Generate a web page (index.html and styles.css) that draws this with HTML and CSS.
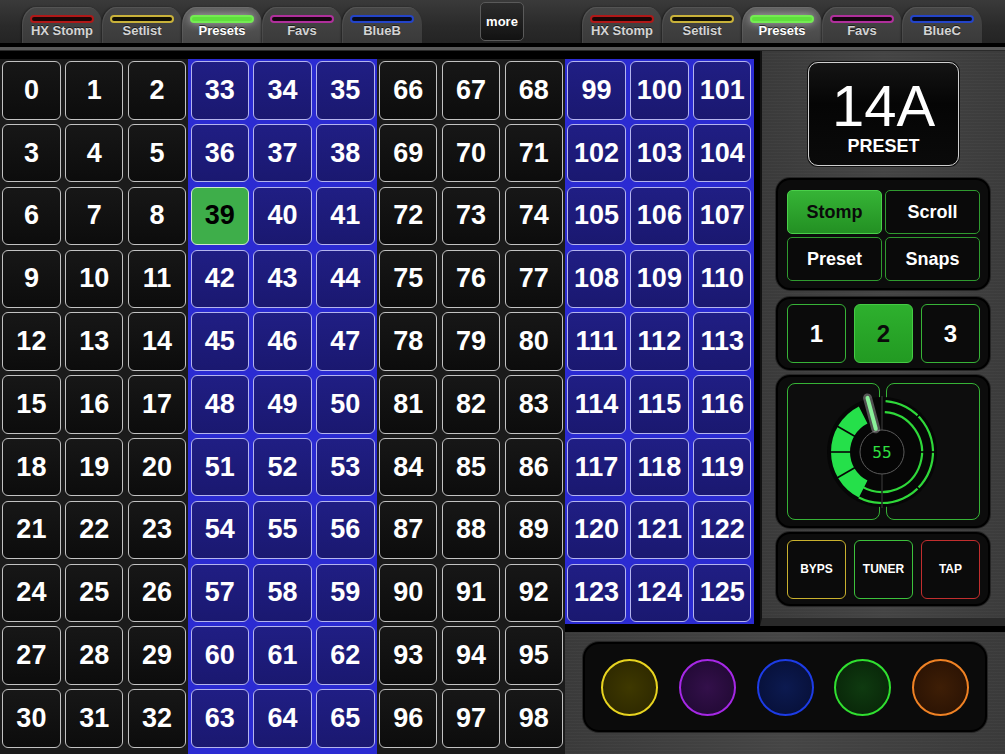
FILE: index.html
```html
<!DOCTYPE html>
<html>
<head>
<meta charset="utf-8">
<link rel="stylesheet" href="styles.css">
</head>
<body>
<div class="header">
  <div class="tabs">
    <div class="tab"><span class="pill pill-red"></span><span class="tab-label">HX Stomp</span></div>
    <div class="tab"><span class="pill pill-yellow"></span><span class="tab-label">Setlist</span></div>
    <div class="tab tab-active"><span class="pill pill-green"></span><span class="tab-label">Presets</span></div>
    <div class="tab"><span class="pill pill-magenta"></span><span class="tab-label">Favs</span></div>
    <div class="tab"><span class="pill pill-blue"></span><span class="tab-label">BlueB</span></div>
  </div>
  <div class="more">more</div>
  <div class="tabs">
    <div class="tab"><span class="pill pill-red"></span><span class="tab-label">HX Stomp</span></div>
    <div class="tab"><span class="pill pill-yellow"></span><span class="tab-label">Setlist</span></div>
    <div class="tab tab-active"><span class="pill pill-green"></span><span class="tab-label">Presets</span></div>
    <div class="tab"><span class="pill pill-magenta"></span><span class="tab-label">Favs</span></div>
    <div class="tab"><span class="pill pill-blue"></span><span class="tab-label">BlueC</span></div>
  </div>
</div>
<div class="divider"></div>
<div class="main">
  <div class="left">
    <div class="block block-dark">
      <div class="cell">0</div><div class="cell">1</div><div class="cell">2</div>
      <div class="cell">3</div><div class="cell">4</div><div class="cell">5</div>
      <div class="cell">6</div><div class="cell">7</div><div class="cell">8</div>
      <div class="cell">9</div><div class="cell">10</div><div class="cell">11</div>
      <div class="cell">12</div><div class="cell">13</div><div class="cell">14</div>
      <div class="cell">15</div><div class="cell">16</div><div class="cell">17</div>
      <div class="cell">18</div><div class="cell">19</div><div class="cell">20</div>
      <div class="cell">21</div><div class="cell">22</div><div class="cell">23</div>
      <div class="cell">24</div><div class="cell">25</div><div class="cell">26</div>
      <div class="cell">27</div><div class="cell">28</div><div class="cell">29</div>
      <div class="cell">30</div><div class="cell">31</div><div class="cell">32</div>
    </div>
    <div class="block block-blue">
      <div class="cell">33</div><div class="cell">34</div><div class="cell">35</div>
      <div class="cell">36</div><div class="cell">37</div><div class="cell">38</div>
      <div class="cell cell-active">39</div><div class="cell">40</div><div class="cell">41</div>
      <div class="cell">42</div><div class="cell">43</div><div class="cell">44</div>
      <div class="cell">45</div><div class="cell">46</div><div class="cell">47</div>
      <div class="cell">48</div><div class="cell">49</div><div class="cell">50</div>
      <div class="cell">51</div><div class="cell">52</div><div class="cell">53</div>
      <div class="cell">54</div><div class="cell">55</div><div class="cell">56</div>
      <div class="cell">57</div><div class="cell">58</div><div class="cell">59</div>
      <div class="cell">60</div><div class="cell">61</div><div class="cell">62</div>
      <div class="cell">63</div><div class="cell">64</div><div class="cell">65</div>
    </div>
    <div class="block block-dark">
      <div class="cell">66</div><div class="cell">67</div><div class="cell">68</div>
      <div class="cell">69</div><div class="cell">70</div><div class="cell">71</div>
      <div class="cell">72</div><div class="cell">73</div><div class="cell">74</div>
      <div class="cell">75</div><div class="cell">76</div><div class="cell">77</div>
      <div class="cell">78</div><div class="cell">79</div><div class="cell">80</div>
      <div class="cell">81</div><div class="cell">82</div><div class="cell">83</div>
      <div class="cell">84</div><div class="cell">85</div><div class="cell">86</div>
      <div class="cell">87</div><div class="cell">88</div><div class="cell">89</div>
      <div class="cell">90</div><div class="cell">91</div><div class="cell">92</div>
      <div class="cell">93</div><div class="cell">94</div><div class="cell">95</div>
      <div class="cell">96</div><div class="cell">97</div><div class="cell">98</div>
    </div>
  </div>
  <div class="right">
    <div class="top-row">
      <div class="block block-blue block-short">
        <div class="cell">99</div><div class="cell">100</div><div class="cell">101</div>
        <div class="cell">102</div><div class="cell">103</div><div class="cell">104</div>
        <div class="cell">105</div><div class="cell">106</div><div class="cell">107</div>
        <div class="cell">108</div><div class="cell">109</div><div class="cell">110</div>
        <div class="cell">111</div><div class="cell">112</div><div class="cell">113</div>
        <div class="cell">114</div><div class="cell">115</div><div class="cell">116</div>
        <div class="cell">117</div><div class="cell">118</div><div class="cell">119</div>
        <div class="cell">120</div><div class="cell">121</div><div class="cell">122</div>
        <div class="cell">123</div><div class="cell">124</div><div class="cell">125</div>
      </div>
      <div class="panel">
        <div class="display">
          <div class="display-big">14A</div>
          <div class="display-small">PRESET</div>
        </div>
        <div class="box box-mode">
          <div class="mbtn mbtn-on">Stomp</div>
          <div class="mbtn">Scroll</div>
          <div class="mbtn">Preset</div>
          <div class="mbtn">Snaps</div>
        </div>
        <div class="box box-nums">
          <div class="nbtn">1</div>
          <div class="nbtn nbtn-on">2</div>
          <div class="nbtn">3</div>
        </div>
        <div class="box box-knob">
          <div class="knob-area">
            <div class="knob-pane"></div>
            <div class="knob-pane"></div>
            <svg class="knob" width="120" height="120" viewBox="0 0 120 120">
              <circle cx="60" cy="60" r="55" fill="#060606"/>
              <path d="M63.56 9.12 A51 51 0 1 1 36.85 105.44" fill="none" stroke="#2fd83a" stroke-width="2.2"/>
              <path d="M62.79 20.10 A40 40 0 1 1 40 94.64" fill="none" stroke="#2fd83a" stroke-width="2.2"/>
              <path d="M36.85 105.44 A51 51 0 0 1 36.85 14.56 L45.47 31.49 A32 32 0 0 0 45.47 88.51 Z" fill="#25e04a"/>
              <g stroke="#060606" stroke-width="1.6">
                <line x1="33.15" y1="75.5" x2="14.97" y2="86"/>
                <line x1="29" y1="60" x2="8" y2="60"/>
                <line x1="33.15" y1="44.5" x2="14.97" y2="34"/>
                <line x1="89.7" y1="30.3" x2="98.9" y2="21.1"/>
                <line x1="98" y1="60" x2="113" y2="60"/>
                <line x1="89.7" y1="89.7" x2="98.9" y2="98.9"/>
              </g>
              <g stroke="#2a2a2a" stroke-width="1.6">
                <line x1="60" y1="4" x2="60" y2="38"/>
                <line x1="60" y1="82" x2="60" y2="116"/>
              </g>
              <circle cx="60" cy="60" r="22" fill="#050505" stroke="#5a5a5a" stroke-width="1"/>
              <line x1="53.79" y1="36.82" x2="45.51" y2="5.91" stroke="#ffffff" stroke-opacity="0.3" stroke-width="9" stroke-linecap="round"/>
              <line x1="53.79" y1="36.82" x2="45.51" y2="5.91" stroke="#8af09a" stroke-width="4" stroke-linecap="round"/>
              <text x="60" y="66" text-anchor="middle" class="knob-val">55</text>
            </svg>
          </div>
        </div>
        <div class="box box-ctrl">
          <div class="cbtn cbtn-yellow">BYPS</div>
          <div class="cbtn cbtn-green">TUNER</div>
          <div class="cbtn cbtn-red">TAP</div>
        </div>
      </div>
    </div>
    <div class="bottom">
      <div class="pads">
        <div class="pad pad-yellow"></div>
        <div class="pad pad-purple"></div>
        <div class="pad pad-blue"></div>
        <div class="pad pad-green"></div>
        <div class="pad pad-orange"></div>
      </div>
    </div>
  </div>
</div>
</body>
</html>
```

FILE: styles.css
```css
* { box-sizing: border-box; }
html, body { margin: 0; padding: 0; }
body {
  width: 1005px;
  height: 754px;
  overflow: hidden;
  background: #000;
  font-family: "Liberation Sans", Arial, Helvetica, sans-serif;
  color: #fff;
}

/* ---------- header ---------- */
.header {
  height: 43px;
  display: flex;
  align-items: flex-end;
  padding-left: 22px;
  background: linear-gradient(#3a3a3a, #2a2a2a 60%, #242424);
}
.tabs {
  display: flex;
  width: 399px;
  height: 36px;
}
.tab {
  flex: 0 0 80px;
  height: 36px;
  display: flex;
  flex-direction: column;
  align-items: center;
  border-radius: 14px 14px 0 0 / 18px 18px 0 0;
  background: linear-gradient(#474747, #3a3a3a);
  box-shadow: inset 1px 1px 0 rgba(255,255,255,0.07), -1px 0 2px rgba(0,0,0,0.45);
}
.tab-active {
  background: linear-gradient(#5e5e5e, #474747);
}
.pill {
  display: block;
  width: 64px;
  height: 8px;
  margin-top: 8px;
  border-radius: 4px;
  border: 2px solid #888;
  background: #0e0e0e;
}
.pill-red { border-color: #b01818; background: #1a0606; }
.pill-yellow { border-color: #c9b23a; background: #110f04; }
.pill-green { border-color: #74ec52; background: #5fdf3d; box-shadow: 0 0 8px rgba(255,255,255,0.55); }
.pill-magenta { border-color: #b0309c; background: #14050f; }
.pill-blue { border-color: #2444c8; background: #040a1e; }
.tab-label {
  margin-top: 0;
  font-size: 13px;
  font-weight: bold;
  line-height: 15px;
  color: #d4d4d4;
  text-shadow: 0 -1px 0 rgba(0,0,0,0.6);
}
.tab-active .tab-label { color: #fff; }
.more {
  align-self: center;
  width: 44px;
  height: 39px;
  margin: 0 58px 0 59px;
  display: flex;
  align-items: center;
  justify-content: center;
  border-radius: 5px;
  border: 1px solid #5a5a5a;
  background: linear-gradient(#2c2c2c, #121212);
  font-size: 13px;
  font-weight: bold;
  color: #fff;
}
.divider {
  height: 8px;
  border-top: 4px solid #000;
  background: #5a5a5a;
  border-bottom: 1px solid #2a2a2a;
}

/* ---------- main ---------- */
.main {
  display: flex;
  height: 703px;
}
.left {
  width: 565.2px;
  display: flex;
}
.block {
  width: 188.4px;
  margin-top: 8px;
  padding: 2.15px;
  display: grid;
  grid-template-columns: repeat(3, 58.5px);
  grid-auto-rows: 58.5px;
  gap: 4.3px;
  align-content: start;
}
.block-dark { background: #1b1b1b; }
.block-blue { background: #2b2bd2; }
.block-short { align-self: flex-start; }

.cell {
  display: flex;
  align-items: center;
  justify-content: center;
  border: 1.5px solid #c2c2c2;
  border-radius: 6px;
  background: linear-gradient(#171717, #0c0c0c);
  font-size: 27px;
  font-weight: bold;
  color: #fff;
}
.block-blue .cell {
  background: linear-gradient(#201e84, #1a1870);
  border-color: #b4b4ee;
}
.block-blue .cell-active {
  background: #3eae4a;
  border-color: #d0e8d0;
  color: #000;
}

.right {
  width: 439.8px;
  display: flex;
  flex-direction: column;
}
.top-row {
  height: 575px;
  display: flex;
  justify-content: space-between;
}

/* ---------- right panel ---------- */
.panel {
  width: 245px;
  display: flex;
  flex-direction: column;
  align-items: center;
  padding-top: 11px;
  border-left: 2px solid #121212;
  border-bottom: 8px solid #2a2a2a;
  background:
    repeating-linear-gradient(0deg, rgba(255,255,255,0.025) 0 1px, rgba(0,0,0,0) 1px 3px),
    linear-gradient(90deg, #3a3a3a, #444 50%, #3b3b3b);
}
.display {
  width: 151px;
  height: 104px;
  margin-bottom: 12px;
  padding-top: 13.5px;
  display: flex;
  flex-direction: column;
  align-items: center;
  border: 1.5px solid #cfcfcf;
  border-radius: 10px;
  background: linear-gradient(#141414, #050505 40%, #0a0a0a);
  box-shadow: 0 0 0 1px #111;
}
.display-big {
  font-size: 58px;
  line-height: 58px;
  color: #fff;
}
.display-small {
  margin-top: 2px;
  font-size: 18px;
  line-height: 18px;
  font-weight: bold;
  color: #fff;
}
.box {
  width: 214px;
  border-radius: 14px;
  border: 2px solid #000;
  background: #0c0c0c;
  box-shadow: 0 0 0 1px #262626;
  display: grid;
  justify-content: center;
}
.box-mode {
  height: 112px;
  padding-top: 10px;
  grid-template-columns: repeat(2, 95px);
  grid-auto-rows: 44px;
  gap: 3px;
  margin-bottom: 7px;
}
.mbtn {
  display: flex;
  align-items: center;
  justify-content: center;
  border: 1.5px solid #2f9a2f;
  border-radius: 5px;
  background: #0a0a0a;
  font-size: 18px;
  font-weight: bold;
  color: #fff;
}
.mbtn-on {
  background: linear-gradient(#36b436, #239023);
  border-color: #4ad04a;
  color: #0a0a0a;
}
.box-nums {
  height: 73px;
  padding-top: 5px;
  grid-template-columns: repeat(3, 59px);
  grid-auto-rows: 59px;
  gap: 8px;
  margin-bottom: 5px;
}
.nbtn {
  display: flex;
  align-items: center;
  justify-content: center;
  border: 1.5px solid #37b337;
  border-radius: 6px;
  background: #0b0b0b;
  font-size: 24px;
  font-weight: bold;
  color: #fff;
}
.nbtn-on {
  background: linear-gradient(#2eb02e, #229a22);
  border-color: #45cc45;
  color: #0a0a0a;
}
.box-knob {
  height: 153px;
  padding-top: 6px;
  margin-bottom: 4px;
}
.knob-area {
  position: relative;
  width: 193px;
  height: 137px;
  display: flex;
  justify-content: space-between;
}
.knob-pane {
  width: 93.5px;
  height: 137px;
  border: 1.5px solid #36b336;
  border-radius: 8px;
  background: #0d0d0d;
}
.knob {
  position: absolute;
  left: 35px;
  top: 9px;
  overflow: visible;
}
.knob-val {
  font-family: "DejaVu Sans Mono", monospace;
  font-size: 16px;
  fill: #2fe040;
}
.box-ctrl {
  height: 74px;
  padding-top: 5.5px;
  grid-template-columns: repeat(3, 59px);
  grid-auto-rows: 59px;
  gap: 8px;
}
.cbtn {
  display: flex;
  align-items: center;
  justify-content: center;
  border: 1.5px solid #888;
  border-radius: 6px;
  background: #0b0b0b;
  font-size: 12px;
  font-weight: bold;
  color: #fff;
}
.cbtn-yellow { border-color: #c9b12e; }
.cbtn-green { border-color: #3cc23c; }
.cbtn-red { border-color: #c22e2e; }

/* ---------- bottom pads ---------- */
.bottom {
  flex: 1;
  margin-top: 6px;
  display: flex;
  justify-content: center;
  padding-top: 10px;
  background:
    repeating-linear-gradient(0deg, rgba(255,255,255,0.025) 0 1px, rgba(0,0,0,0) 1px 3px),
    linear-gradient(90deg, #3a3a3a, #454545 50%, #3a3a3a);
}
.pads {
  width: 404px;
  height: 90px;
  display: flex;
  align-items: center;
  justify-content: space-between;
  padding: 0 16px;
  border-radius: 16px;
  border: 2px solid #000;
  background: #0b0b0b;
  box-shadow: 0 0 0 1px #252525;
}
.pad {
  width: 57px;
  height: 57px;
  border-radius: 50%;
  border: 2.5px solid #888;
}
.pad-yellow { border-color: #e8d420; background: radial-gradient(#3e3800, #2a2500); }
.pad-purple { border-color: #a628e6; background: radial-gradient(#33104a, #1e0830); }
.pad-blue { border-color: #1d3ce6; background: radial-gradient(#0c1a50, #060e34); }
.pad-green { border-color: #30e030; background: radial-gradient(#0f3a10, #072207); }
.pad-orange { border-color: #f08224; background: radial-gradient(#3e1e06, #261003); }
```
